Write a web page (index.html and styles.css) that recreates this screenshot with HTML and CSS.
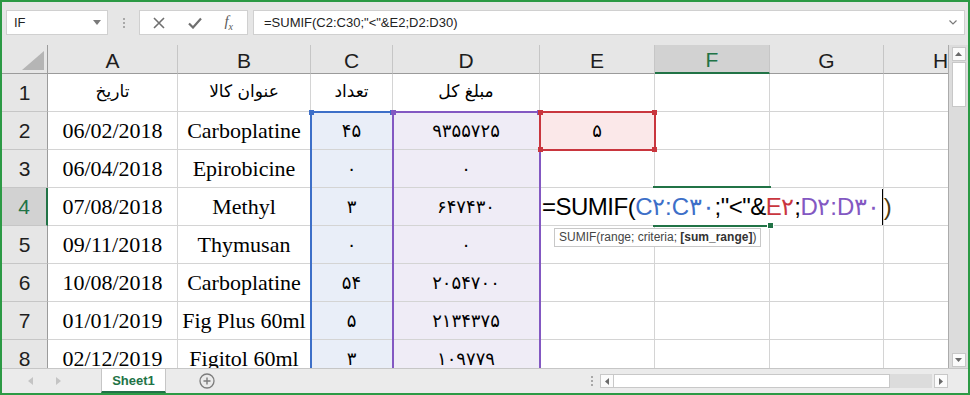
FILE: index.html
```html
<!DOCTYPE html>
<html>
<head>
    <title>Excel - SUMIF</title>
    <link rel="stylesheet" href="styles.css">
</head>
<body>
    <div class="window">
        <div class="formula-bar">
            <div class="name-box">
                <span>IF</span>
                <svg class="dd" width="8" height="5" viewBox="0 0 8 5"><path d="M0 0H8L4 5Z" fill="#7a7a7a"/></svg>
            </div>
            <div class="fb-dots"><i></i><i></i><i></i></div>
            <div class="fb-buttons">
                <svg width="12" height="12" viewBox="0 0 12 12"><path d="M1 1L11 11M11 1L1 11" stroke="#6f6f6f" stroke-width="1.6"/></svg>
                <svg width="14" height="12" viewBox="0 0 14 12"><path d="M1 6.5L5 10.5L13 1.5" stroke="#6f6f6f" stroke-width="2.2" fill="none"/></svg>
                <span class="fx">f<sub>x</sub></span>
            </div>
            <div class="fb-input">
                <span>=SUMIF(C2:C30;"&lt;"&amp;E2;D2:D30)</span>
                <svg width="8" height="5" viewBox="0 0 8 5"><path d="M0.5 0.5L4 4L7.5 0.5" stroke="#7a7a7a" stroke-width="1.2" fill="none"/></svg>
            </div>
        </div>

        <div class="sheet-wrap">
            <div class="sheet">
                <!-- header row -->
                <div class="corner"><svg width="22" height="19" viewBox="0 0 22 19"><path d="M22 0V19H0Z" fill="#b5b5b5"/></svg></div>
                <div class="hd">A</div>
                <div class="hd">B</div>
                <div class="hd">C</div>
                <div class="hd">D</div>
                <div class="hd">E</div>
                <div class="hd hd-active">F</div>
                <div class="hd">G</div>
                <div class="hd">H</div>

                <div class="rh">1</div>
                <div class="c fa-text">تاریخ</div>
                <div class="c fa-text">عنوان کالا</div>
                <div class="c fa-text">تعداد</div>
                <div class="c fa-text">مبلغ کل</div>
                <div class="c"></div><div class="c"></div><div class="c"></div><div class="c"></div>

                <div class="rh">2</div>
                <div class="c">06/02/2018</div>
                <div class="c">Carboplatine</div>
                <div class="c fa blue">۴۵</div>
                <div class="c fa purple">۹۳۵۵۷۲۵</div>
                <div class="c fa pink">۵</div>
                <div class="c"></div><div class="c"></div><div class="c"></div>

                <div class="rh">3</div>
                <div class="c">06/04/2018</div>
                <div class="c">Epirobicine</div>
                <div class="c fa blue">۰</div>
                <div class="c fa purple">۰</div>
                <div class="c"></div><div class="c"></div><div class="c"></div><div class="c"></div>

                <div class="rh rh-active">4</div>
                <div class="c">07/08/2018</div>
                <div class="c">Methyl</div>
                <div class="c fa blue">۳</div>
                <div class="c fa purple">۶۴۷۴۳۰</div>
                <div class="c"></div><div class="c"></div><div class="c"></div><div class="c"></div>

                <div class="rh">5</div>
                <div class="c">09/11/2018</div>
                <div class="c">Thymusan</div>
                <div class="c fa blue">۰</div>
                <div class="c fa purple">۰</div>
                <div class="c"></div><div class="c"></div><div class="c"></div><div class="c"></div>

                <div class="rh">6</div>
                <div class="c">10/08/2018</div>
                <div class="c">Carboplatine</div>
                <div class="c fa blue">۵۴</div>
                <div class="c fa purple">۲۰۵۴۷۰۰</div>
                <div class="c"></div><div class="c"></div><div class="c"></div><div class="c"></div>

                <div class="rh">7</div>
                <div class="c">01/01/2019</div>
                <div class="c">Fig Plus 60ml</div>
                <div class="c fa blue">۵</div>
                <div class="c fa purple">۲۱۳۴۳۷۵</div>
                <div class="c"></div><div class="c"></div><div class="c"></div><div class="c"></div>

                <div class="rh">8</div>
                <div class="c">02/12/2019</div>
                <div class="c">Figitol 60ml</div>
                <div class="c fa blue">۳</div>
                <div class="c fa purple">۱۰۹۷۷۹</div>
                <div class="c"></div><div class="c"></div><div class="c"></div><div class="c"></div>

                <!-- cell being edited -->
                <div class="edit-cell">
                    <span>=SUMIF(</span><span class="ref-blue">C۲:C۳۰</span><span>;"&lt;"&amp;</span><span class="ref-red">E۲</span><span>;</span><span class="ref-purple">D۲:D۳۰</span><span class="caret"></span><span class="paren">)</span>
                    <div class="tip">SUMIF(range; criteria; <b>[sum_range]</b>)</div>
                </div>

                <!-- reference highlights -->
                <div class="range range-blue"></div>
                <div class="range range-purple"></div>
                <div class="range range-red"><i class="h-bl"></i><i class="h-br"></i></div>
                <div class="active-cell"></div>
            </div>
            <div class="vscroll">
                <div class="sb-btn"><svg width="7" height="4" viewBox="0 0 7 4"><path d="M0 4H7L3.5 0Z" fill="#6a6a6a"/></svg></div>
                <div class="sb-thumb"></div>
                <div class="sb-space"></div>
                <div class="sb-btn"><svg width="7" height="4" viewBox="0 0 7 4"><path d="M0 0H7L3.5 4Z" fill="#6a6a6a"/></svg></div>
            </div>
        </div>

        <div class="tabbar">
            <div class="tab-nav">
                <svg width="5" height="8" viewBox="0 0 5 8"><path d="M5 0V8L0 4Z" fill="#c4c4c4"/></svg>
                <svg width="5" height="8" viewBox="0 0 5 8"><path d="M0 0V8L5 4Z" fill="#c4c4c4"/></svg>
            </div>
            <div class="tab">Sheet1</div>
            <div class="tab-add">
                <svg width="16" height="16" viewBox="0 0 16 16"><circle cx="8" cy="8" r="7" fill="none" stroke="#7c7c7c" stroke-width="1.3"/><path d="M8 4.5V11.5M4.5 8H11.5" stroke="#7c7c7c" stroke-width="1.4"/></svg>
            </div>
            <div class="tab-fill"></div>
            <div class="hs-dots"><i></i><i></i><i></i></div>
            <div class="hscroll">
                <div class="sb-btn"><svg width="4" height="7" viewBox="0 0 4 7"><path d="M4 0V7L0 3.5Z" fill="#6a6a6a"/></svg></div>
                <div class="hs-track"></div>
                <div class="hs-gap"></div>
                <div class="sb-btn"><svg width="4" height="7" viewBox="0 0 4 7"><path d="M0 0V7L4 3.5Z" fill="#6a6a6a"/></svg></div>
            </div>
        </div>
    </div>
</body>
</html>
```

FILE: styles.css
```css
:root {
    --xl-green: #217346;
    --frame-green: #2c9a45;
    --chrome-bg: #e6e6e6;
    --grid-line: #d4d4d4;
    --header-line: #c6c6c6;
    --header-edge: #9b9b9b;
    --ref-blue: #3d6fc8;
    --ref-purple: #8358c2;
    --ref-red: #c9363e;
}

body {
    margin: 0;
    font-family: "Liberation Sans", Arial, sans-serif;
}

.window {
    width: 970px;
    height: 395px;
    box-sizing: border-box;
    border: 2px solid var(--frame-green);
    background-color: var(--chrome-bg);
    display: flex;
    flex-direction: column;
    overflow: hidden;
}

/* formula bar */
.formula-bar {
    height: 43px;
    flex: none;
    display: flex;
    align-items: flex-start;
    padding: 8px 3px 0 4px;
    box-sizing: border-box;
}

.name-box,
.fb-buttons,
.fb-input {
    height: 25px;
    box-sizing: border-box;
    background-color: #ffffff;
    border: 1px solid #d0d0d0;
    display: flex;
    align-items: center;
}

.name-box {
    width: 102px;
    padding: 0 6px 0 7px;
    justify-content: space-between;
    font-size: 13px;
    color: #222;
}

.fb-dots {
    width: 31px;
    height: 25px;
    display: flex;
    flex-direction: column;
    align-items: center;
    justify-content: center;
    gap: 2px;
}

.fb-dots i,
.hs-dots i {
    width: 2px;
    height: 2px;
    background-color: #a8a8a8;
}

.fb-buttons {
    width: 109px;
    padding: 0 14px 0 13px;
    justify-content: space-between;
}

.fx {
    font-family: "Liberation Serif", serif;
    font-style: italic;
    font-size: 15px;
    color: #5a5a5a;
    line-height: 1;
}

.fx sub {
    font-size: 10px;
}

.fb-input {
    flex: 1;
    margin-left: 5px;
    padding: 0 7px 0 10px;
    justify-content: space-between;
    font-size: 13px;
    color: #222;
}

/* sheet */
.sheet-wrap {
    height: 323px;
    flex: none;
    display: flex;
}

.sheet {
    width: 947px;
    flex: none;
    position: relative;
    display: grid;
    grid-template-columns: 46px 130px 133px 82px 147px 115px 115px 114px 114px;
    grid-template-rows: 29px repeat(8, 38px);
    overflow: hidden;
    background-color: #ffffff;
    border-right: 1px solid #ababab;
    box-sizing: border-box;
}

.corner,
.hd,
.rh {
    background-color: var(--chrome-bg);
    color: #1e1e1e;
    font-size: 21px;
    display: flex;
    align-items: center;
    justify-content: center;
    box-sizing: border-box;
}

.corner {
    border-right: 1px solid var(--header-edge);
    border-bottom: 1px solid var(--header-edge);
    align-items: flex-end;
    justify-content: flex-end;
    padding: 0 3px 3px 0;
}

.hd {
    border-right: 1px solid var(--header-line);
    border-bottom: 1px solid var(--header-edge);
    padding-top: 3px;
}

.hd-active {
    background-color: #d2d2d2;
    color: var(--xl-green);
    border-bottom: 2px solid var(--xl-green);
}

.rh {
    border-right: 1px solid var(--header-edge);
    border-bottom: 1px solid var(--header-line);
}

.rh-active {
    background-color: #d2d2d2;
    color: var(--xl-green);
    border-right: 2px solid var(--xl-green);
}

.c {
    border-right: 1px solid var(--grid-line);
    border-bottom: 1px solid var(--grid-line);
    box-sizing: border-box;
    display: flex;
    align-items: center;
    justify-content: center;
    font-family: "Liberation Serif", "DejaVu Sans", serif;
    font-size: 22px;
    color: #000;
    white-space: nowrap;
    overflow: hidden;
}

.fa,
.fa-text {
    font-family: "DejaVu Sans", sans-serif;
    font-size: 18px;
}

.fa-text {
    font-size: 17px;
    padding-bottom: 4px;
}

.blue { background-color: #e9eef8; }
.purple { background-color: #efecf6; }
.pink { background-color: #fbe8e9; }

/* edit box over E4:G4 (grid-positioned overlay) */
.edit-cell {
    position: absolute;
    grid-column: 6 / 9;
    grid-row: 5 / 6;
    top: 0;
    left: 0;
    right: 1px;
    bottom: 1px;
    background-color: #ffffff;
    display: flex;
    align-items: center;
    padding-left: 2px;
    font-size: 24px;
    letter-spacing: -0.5px;
    color: #000;
    white-space: nowrap;
    z-index: 1;
}

.ref-blue { color: var(--ref-blue); }
.ref-red { color: var(--ref-red); }
.ref-purple { color: var(--ref-purple); }

.caret {
    flex: none;
    width: 1px;
    height: 36px;
    background-color: #000;
    margin: 0 1px 0 2px;
}

.paren {
    color: #4a3a10;
}

.tip {
    position: absolute;
    left: 14px;
    top: 40px;
    height: 19px;
    box-sizing: border-box;
    padding: 0 4px;
    background-color: #ffffff;
    border: 1px solid #c8c8c8;
    font-size: 12px;
    line-height: 17px;
    letter-spacing: 0;
    color: #454545;
}

.tip b {
    color: #333;
}

/* range outlines */
.range {
    position: absolute;
    grid-row: 3 / 10;
    top: -1px;
    left: -1px;
    right: -1px;
    bottom: 0;
    border: 2px solid;
    border-bottom: none;
    z-index: 2;
}

.range::before,
.range::after,
.range i {
    content: "";
    position: absolute;
    width: 5px;
    height: 5px;
}

.range::before { left: -3px; top: -3px; }
.range::after { right: -3px; top: -3px; }
.range i.h-bl { left: -3px; bottom: -3px; }
.range i.h-br { right: -3px; bottom: -3px; }

.range-blue {
    grid-column: 4 / 5;
    border-color: var(--ref-blue);
}

.range-blue::before,
.range-blue::after { background-color: var(--ref-blue); }

.range-purple {
    grid-column: 5 / 6;
    border-color: var(--ref-purple);
}

.range-purple::before,
.range-purple::after { background-color: var(--ref-purple); }

.range-red {
    grid-column: 6 / 7;
    grid-row: 3 / 4;
    bottom: -1px;
    border-color: var(--ref-red);
    border-bottom: 2px solid var(--ref-red);
}

.range-red::before,
.range-red::after,
.range-red i { background-color: var(--ref-red); }

.active-cell {
    position: absolute;
    grid-column: 7 / 8;
    grid-row: 5 / 6;
    top: -2px;
    left: -2px;
    right: -1px;
    bottom: -1px;
    border-top: 2px solid var(--xl-green);
    border-bottom: 2px solid var(--xl-green);
    z-index: 2;
}

.active-cell::after {
    content: "";
    position: absolute;
    right: -3px;
    bottom: -4px;
    width: 5px;
    height: 5px;
    background-color: var(--xl-green);
    border: 1px solid #fff;
}

/* vertical scrollbar */
.vscroll {
    width: 19px;
    flex: none;
    background-color: #dcdcdc;
    display: flex;
    flex-direction: column;
    align-items: center;
    padding: 2px 0 1px;
    box-sizing: border-box;
}

.sb-btn {
    width: 14px;
    height: 14px;
    background-color: #fbfbfb;
    border: 1px solid #c8c8c8;
    box-sizing: border-box;
    display: flex;
    align-items: center;
    justify-content: center;
    flex: none;
}

.sb-thumb {
    width: 14px;
    height: 45px;
    margin-top: 1px;
    background-color: #ffffff;
    border: 1px solid #c8c8c8;
    box-sizing: border-box;
}

.sb-space {
    flex: 1;
}

/* sheet tabs */
.tabbar {
    height: 25px;
    flex: none;
    display: flex;
    align-items: stretch;
    border-top: 1px solid #c6c6c6;
    box-sizing: border-box;
    background-color: #ebebeb;
}

.tab-nav {
    width: 99px;
    display: flex;
    align-items: center;
    gap: 23px;
    padding-left: 26px;
    box-sizing: border-box;
}

.tab {
    width: 65px;
    background-color: #ffffff;
    border-left: 1px solid #c6c6c6;
    border-right: 1px solid #c6c6c6;
    border-bottom: 2px solid var(--xl-green);
    box-sizing: border-box;
    font-size: 13px;
    font-weight: bold;
    color: var(--xl-green);
    display: flex;
    align-items: center;
    justify-content: center;
}

.tab-add {
    width: 82px;
    display: flex;
    align-items: center;
    justify-content: center;
}

.tab-fill {
    flex: 1;
}

.hs-dots {
    width: 16px;
    display: flex;
    flex-direction: column;
    align-items: center;
    justify-content: center;
    gap: 2px;
}

.hscroll {
    width: 348px;
    display: flex;
    align-items: center;
    margin-right: 20px;
}

.hs-track {
    width: 276px;
    height: 14px;
    background-color: #ffffff;
    border: 1px solid #c8c8c8;
    border-left: none;
    box-sizing: border-box;
}

.hs-gap {
    flex: 1;
    height: 14px;
    background-color: #dcdcdc;
    margin-right: 2px;
}
```
